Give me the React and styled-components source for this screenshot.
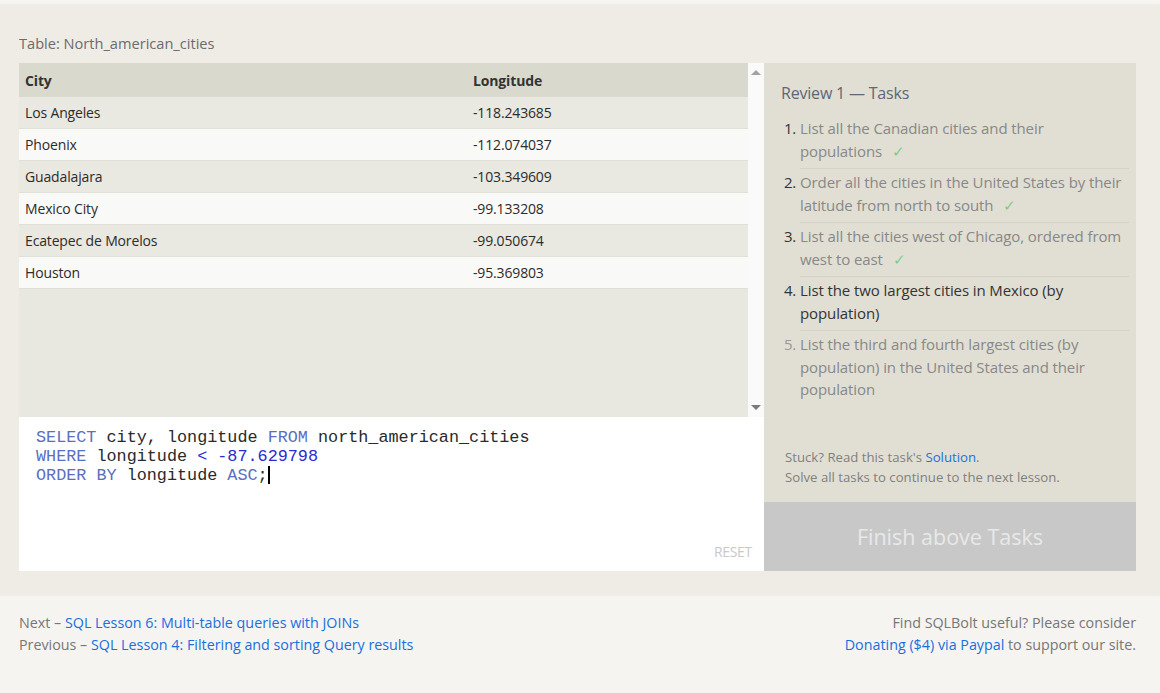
import React from 'react';
import styled, { createGlobalStyle } from 'styled-components';

const GlobalStyle = createGlobalStyle`
  html, body {
    margin: 0;
    padding: 0;
    background: #f5f4f0;
    font-family: "Open Sans", "Noto Sans", sans-serif;
  }
`;

const Page = styled.div`
  width: 1160px;
  height: 693px;
  overflow: hidden;
  background: #f5f4f0;
  padding-top: 4px;
  box-sizing: border-box;
`;

const Main = styled.section`
  background: #efece5;
  padding: 30px 24px 25px 19px;
`;

const TableLabel = styled.div`
  color: #6b6b6b;
  font-size: 14.6px;
  height: 29px;
  line-height: 18px;
`;

const Workspace = styled.div`
  display: grid;
  grid-template-columns: 745px 372px;
  height: 508px;
`;

const LeftColumn = styled.div`
  display: flex;
  flex-direction: column;
`;

const TableWrap = styled.div`
  height: 354px;
  display: flex;
  background: #e8e7e0;
`;

const Table = styled.div`
  flex: 1;
`;

const Row = styled.div`
  display: grid;
  grid-template-columns: 448px 1fr;
  height: ${p => (p.$head ? 34 : 32)}px;
  align-items: center;
  padding-left: 6px;
  font-size: 14px;
  letter-spacing: -0.15px;
  color: ${p => (p.$head ? '#333' : '#2c2c2c')};
  font-weight: ${p => (p.$head ? 700 : 400)};
  background: ${p => (p.$head ? '#dad9cd' : p.$even ? '#f9f9f8' : '#e9e8e1')};
  border-bottom: ${p => (p.$head ? 'none' : '1px solid #e0dfd8')};
  box-sizing: border-box;
`;

const Scrollbar = styled.div`
  width: 16px;
  background: #fafafa;
  display: flex;
  flex-direction: column;
  justify-content: space-between;
  align-items: center;
  padding: 7px 0;
  box-sizing: border-box;
`;

const Arrow = styled.div`
  width: 0;
  height: 0;
  border-left: 5px solid transparent;
  border-right: 5px solid transparent;
  ${p => (p.$up ? 'border-bottom: 5px solid #a3a3a3;' : 'border-top: 5px solid #7a7a7a;')}
`;

const Editor = styled.div`
  position: relative;
  flex: 1;
  background: #fff;
  padding: 11px 17px 9px;
  font-family: "Liberation Mono", "Courier New", monospace;
  font-size: 16.8px;
  line-height: 19px;
  color: #2a2a2a;
  white-space: pre;
`;

const Kw = styled.span`
  color: #5a6fbf;
`;

const Num = styled.span`
  color: #2b2bd0;
`;

const Cursor = styled.span`
  display: inline-block;
  width: 2px;
  height: 18px;
  background: #000;
  vertical-align: -4px;
`;

const Reset = styled.div`
  position: absolute;
  right: 12px;
  bottom: 10px;
  font-family: "Open Sans", "Noto Sans", sans-serif;
  font-size: 14px;
  color: #c9c9c9;
  letter-spacing: -0.3px;
`;

const TaskPanel = styled.aside`
  background: #e1dfd4;
  display: flex;
  flex-direction: column;
`;

const TaskBody = styled.div`
  flex: 1;
  padding: 19px 7px 0 17px;
  display: flex;
  flex-direction: column;
`;

const TaskHeading = styled.h3`
  margin: 0 0 11px;
  font-size: 16px;
  font-weight: 400;
  color: #5f6677;
  letter-spacing: -0.2px;
`;

const TaskList = styled.ol`
  margin: 0;
  padding: 0 0 0 19px;
`;

const Task = styled.li`
  font-size: 15px;
  line-height: 22.5px;
  padding: 2px 0 6px;
  letter-spacing: -0.1px;
  color: ${p => (p.$state === 'current' ? '#333' : '#888')};
  border-bottom: ${p => (p.$last ? 'none' : '1px solid #d5d3c8')};
  &::marker {
    color: ${p => (p.$state === 'todo' ? '#999' : '#333')};
  }
`;

const Check = styled.span`
  display: inline-block;
  line-height: 1;
  color: #7ccd8e;
  margin-left: 10px;
`;

const Hint = styled.div`
  margin-top: auto;
  padding: 0 0 15px 4px;
  font-size: 13.2px;
  line-height: 20px;
  color: #7f7f7f;
`;

const Link = styled.a`
  color: #1a6fe0;
  text-decoration: none;
`;

const FinishButton = styled.div`
  height: 69px;
  background: #c8c8c8;
  color: #e8e8e8;
  font-size: 21.5px;
  display: flex;
  align-items: center;
  justify-content: center;
`;

const Footer = styled.footer`
  display: flex;
  justify-content: space-between;
  padding: 16px 24px 0 19px;
  font-size: 14.3px;
  line-height: 22px;
  color: #777;
`;

const FooterRight = styled.div`
  text-align: right;
`;

const rows = [
  ['Los Angeles', '-118.243685'],
  ['Phoenix', '-112.074037'],
  ['Guadalajara', '-103.349609'],
  ['Mexico City', '-99.133208'],
  ['Ecatepec de Morelos', '-99.050674'],
  ['Houston', '-95.369803'],
];

const tasks = [
  { text: 'List all the Canadian cities and their populations', state: 'done' },
  { text: 'Order all the cities in the United States by their latitude from north to south', state: 'done' },
  { text: 'List all the cities west of Chicago, ordered from west to east', state: 'done' },
  { text: 'List the two largest cities in Mexico (by population)', state: 'current' },
  { text: 'List the third and fourth largest cities (by population) in the United States and their population', state: 'todo' },
];

const App = () => {
  return (
    <Page>
      <GlobalStyle />
      <Main>
        <TableLabel>Table: North_american_cities</TableLabel>
        <Workspace>
          <LeftColumn>
            <TableWrap>
              <Table>
                <Row $head>
                  <span>City</span>
                  <span>Longitude</span>
                </Row>
                {rows.map((r, i) => (
                  <Row key={r[0]} $even={i % 2 === 1}>
                    <span>{r[0]}</span>
                    <span>{r[1]}</span>
                  </Row>
                ))}
              </Table>
              <Scrollbar>
                <Arrow $up />
                <Arrow />
              </Scrollbar>
            </TableWrap>
            <Editor>
              <Kw>SELECT</Kw> city, longitude <Kw>FROM</Kw> north_american_cities{'\n'}
              <Kw>WHERE</Kw> longitude <Num>&lt; -87.629798</Num>{'\n'}
              <Kw>ORDER BY</Kw> longitude <Kw>ASC</Kw>;<Cursor />
              <Reset>RESET</Reset>
            </Editor>
          </LeftColumn>
          <TaskPanel>
            <TaskBody>
              <TaskHeading>Review 1 — Tasks</TaskHeading>
              <TaskList>
                {tasks.map((t, i) => (
                  <Task key={i} $state={t.state} $last={i === tasks.length - 1}>
                    {t.text}
                    {t.state === 'done' && <Check>✓</Check>}
                  </Task>
                ))}
              </TaskList>
              <Hint>
                Stuck? Read this task's <Link href="#">Solution</Link>.<br />
                Solve all tasks to continue to the next lesson.
              </Hint>
            </TaskBody>
            <FinishButton>Finish above Tasks</FinishButton>
          </TaskPanel>
        </Workspace>
      </Main>
      <Footer>
        <div>
          Next – <Link href="#">SQL Lesson 6: Multi-table queries with JOINs</Link>
          <br />
          Previous – <Link href="#">SQL Lesson 4: Filtering and sorting Query results</Link>
        </div>
        <FooterRight>
          Find SQLBolt useful? Please consider
          <br />
          <Link href="#">Donating ($4) via Paypal</Link> to support our site.
        </FooterRight>
      </Footer>
    </Page>
  );
};

export default App;
